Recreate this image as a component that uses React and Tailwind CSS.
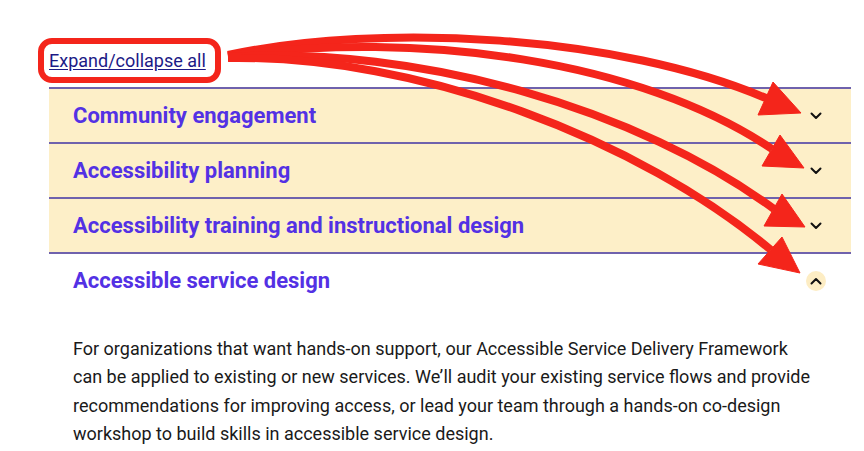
import React from "react";

const items = [
  { title: "Community engagement", open: false },
  { title: "Accessibility planning", open: false },
  { title: "Accessibility training and instructional design", open: false },
  { title: "Accessible service design", open: true },
];

function Chevron({ up }) {
  return (
    <svg width="12" height="8" viewBox="0 0 12 8" fill="none">
      <path
        d={up ? "M1.5 6.5 6 2l4.5 4.5" : "M1.5 1.5 6 6l4.5-4.5"}
        stroke="#111"
        strokeWidth="2"
        strokeLinecap="round"
        strokeLinejoin="round"
      />
    </svg>
  );
}

// Callout drawn on top of the page: box around the toggle link and arrows to each chevron
function Callout() {
  const red = "#f4251b";
  const shafts = [
    "M228,55 C380,22 620,35 768,99",
    "M228,56 C420,30 640,60 772,149",
    "M228,57 C420,45 640,110 774,209",
    "M228,58 C420,55 640,140 771,250",
  ];
  const heads = [
    "758,115 773,82 801,113",
    "762,166 780,135 804,168",
    "764,226 782,194 805,227",
    "758,264 782,237 800,273",
  ];
  return (
    <svg
      className="absolute left-0 top-0 pointer-events-none"
      width="864"
      height="451"
      viewBox="0 0 864 451"
    >
      <rect x="41" y="41" width="177" height="39" rx="11" fill="none" stroke={red} strokeWidth="6" />
      {shafts.map((d, i) => (
        <path key={i} d={d} fill="none" stroke={red} strokeWidth="8" />
      ))}
      {heads.map((p, i) => (
        <polygon key={i} points={p} fill={red} stroke={red} strokeWidth="1" strokeLinejoin="round" />
      ))}
    </svg>
  );
}

export default function App() {
  return (
    <div
      className="relative w-[864px] h-[451px] overflow-hidden bg-white pt-[49px]"
      style={{ fontFamily: "Roboto, 'Liberation Sans', sans-serif" }}
    >
      <div className="pl-[49px] mb-[13px]">
        <a href="#" className="text-[18px] leading-[24px] text-[#1c1a86] underline underline-offset-2">
          Expand/collapse all
        </a>
      </div>

      <div className="ml-[49px] w-[802px]">
        {items.map((it) => (
          <div key={it.title} className="border-t-2 border-[#6f62ad]">
            <div
              className={`flex h-[53px] items-center justify-between pl-[24px] pr-[25px] ${
                it.open ? "bg-white" : "bg-[#fdefc8]"
              }`}
            >
              <span className="text-[22px] leading-[28px] font-bold text-[#5331e4]">{it.title}</span>
              <span
                className={`flex h-[20px] w-[20px] items-center justify-center rounded-full ${
                  it.open ? "bg-[#fdedc4]" : ""
                }`}
              >
                <Chevron up={it.open} />
              </span>
            </div>
            {it.open && (
              <p className="mt-[28px] pl-[24px] text-[18px] leading-[28.3px] text-[#1a1a1a]">
                <span className="block">
                  For organizations that want hands-on support, our Accessible Service Delivery Framework
                </span>
                <span className="block">
                  can be applied to existing or new services. We’ll audit your existing service flows and provide
                </span>
                <span className="block">
                  recommendations for improving access, or lead your team through a hands-on co-design
                </span>
                <span className="block">workshop to build skills in accessible service design.</span>
              </p>
            )}
          </div>
        ))}
      </div>

      <Callout />
    </div>
  );
}
